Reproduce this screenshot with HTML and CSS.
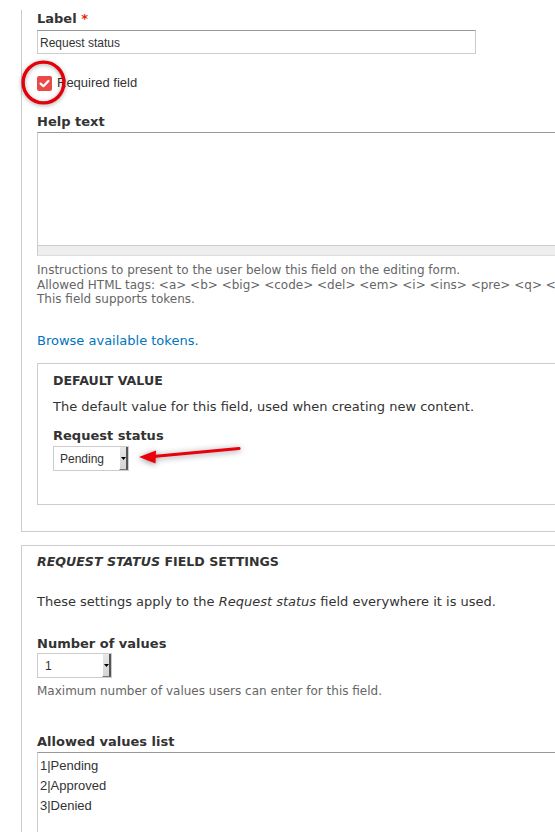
FILE: index.html
```html
<!DOCTYPE html>
<html lang="en">
<head>
<meta charset="utf-8">
<title>Field settings</title>
<link rel="stylesheet" href="styles.css">
</head>
<body>
<div class="page">
  <div class="fieldset fs-top">
    <div class="label first">Label <span class="req">*</span></div>
    <div class="textinput">Request status</div>
    <div class="check-row">
      <span class="checkbox"><svg width="15" height="15" viewBox="0 0 15 15"><path d="M3.6 7.6 L6.4 10.2 L11.4 4.9" fill="none" stroke="#fff" stroke-width="2.2" stroke-linecap="round" stroke-linejoin="round"/></svg></span>
      <span class="check-label">Required field</span>
    </div>
    <div class="label help-label">Help text</div>
    <div class="textarea help-area"></div>
    <div class="grippy"></div>
    <div class="desc">Instructions to present to the user below this field on the editing form.<br>Allowed HTML tags: &lt;a&gt; &lt;b&gt; &lt;big&gt; &lt;code&gt; &lt;del&gt; &lt;em&gt; &lt;i&gt; &lt;ins&gt; &lt;pre&gt; &lt;q&gt; &lt;small&gt; &lt;span&gt; &lt;strong&gt; &lt;sub&gt; &lt;sup&gt; &lt;tt&gt; &lt;ol&gt; &lt;ul&gt; &lt;li&gt; &lt;p&gt; &lt;br&gt; &lt;img&gt;<br>This field supports tokens.</div>
    <a class="link" href="#">Browse available tokens.</a>
    <div class="fieldset inner">
      <div class="legend">DEFAULT VALUE</div>
      <div class="text">The default value for this field, used when creating new content.</div>
      <div class="label sel-label">Request status</div>
      <div class="select sel-pending"><span class="sel-text">Pending</span><span class="sel-btn"><svg width="5" height="3" viewBox="0 0 5 3"><path d="M0 0 H5 L2.5 3 Z" fill="#000"/></svg></span></div>
    </div>
  </div>

  <div class="fieldset fs-settings">
    <div class="legend"><em>REQUEST STATUS</em> FIELD SETTINGS</div>
    <div class="text settings-text">These settings apply to the <em>Request status</em> field everywhere it is used.</div>
    <div class="label num-label">Number of values</div>
    <div class="select sel-num"><span class="sel-text">1</span><span class="sel-btn"><svg width="5" height="3" viewBox="0 0 5 3"><path d="M0 0 H5 L2.5 3 Z" fill="#000"/></svg></span></div>
    <div class="desc num-desc">Maximum number of values users can enter for this field.</div>
    <div class="label allowed-label">Allowed values list</div>
    <div class="textarea values-area">1|Pending<br>2|Approved<br>3|Denied</div>
  </div>
</div>

<svg class="anno-circle" width="50" height="52" viewBox="0 0 50 52"><circle cx="24.5" cy="25.5" r="20.4" fill="none" stroke="#e3000b" stroke-width="3.4"/></svg>
<svg class="anno-arrow" width="120" height="34" viewBox="0 0 120 34"><path d="M110 12.5 L24 20.5" stroke="#e8000a" stroke-width="3.2" stroke-linecap="round" fill="none"/><path d="M10 21 L27 14.5 L26.5 27.5 Z" fill="#e8000a"/></svg>
</body>
</html>
```

FILE: styles.css
```css
html, body {
  margin: 0;
  padding: 0;
  overflow: hidden;
  background: #fff;
}

body {
  width: 555px;
  height: 832px;
  position: relative;
  font-family: "DejaVu Sans", "Noto Sans", sans-serif;
  font-size: 13px;
  color: #333;
}

.page {
  padding-left: 21px;
}

.fieldset {
  border: 1px solid #ccc;
  border-right: none;
}

.fs-top {
  border-top: none;
  padding: 0 0 26px 15px;
}

.label {
  font-weight: bold;
  line-height: 18px;
  white-space: nowrap;
}

.label.first {
  margin-top: 10px;
  margin-bottom: 2px;
}

.req {
  color: #e32700;
}

.textinput {
  box-sizing: border-box;
  width: 439px;
  height: 24px;
  border: 1px solid #ccc;
  border-top-color: #999;
  padding: 1px 2px 0;
  font-family: "Liberation Sans", Arial, sans-serif;
  font-size: 12px;
  line-height: 22px;
  color: #333;
}

.check-row {
  margin-top: 20px;
  height: 18px;
  display: flex;
  align-items: center;
  gap: 5px;
}

.checkbox {
  width: 15px;
  height: 15px;
  border-radius: 2px;
  background: #e84a4a;
  display: block;
}

.checkbox svg {
  display: block;
}

.check-label {
  font-family: "Liberation Sans", Arial, sans-serif;
  font-size: 13px;
  line-height: 18px;
}

.help-label {
  margin-top: 21px;
  margin-bottom: 1px;
}

.textarea {
  box-sizing: border-box;
  width: 620px;
  border: 1px solid #ccc;
  border-top-color: #999;
  border-right: none;
  background: #fff;
}

.help-area {
  height: 114px;
}

.grippy {
  box-sizing: border-box;
  width: 620px;
  height: 10px;
  background: #eee;
  border-left: 1px solid #ccc;
  border-bottom: 1px solid #ddd;
}

.desc {
  margin-top: 7px;
  font-size: 12px;
  line-height: 14.5px;
  color: #666;
  white-space: nowrap;
}

.link {
  display: block;
  margin-top: 25.5px;
  line-height: 18px;
  color: #0074bd;
  text-decoration: none;
  white-space: nowrap;
}

.inner {
  margin-top: 13px;
  padding: 8px 0 33px 15px;
}

.legend {
  font-weight: bold;
  font-size: 12.6px;
  line-height: 18px;
  white-space: nowrap;
}

.text {
  margin-top: 8px;
  line-height: 18px;
  white-space: nowrap;
}

.sel-label {
  margin-top: 11px;
  margin-bottom: 1px;
}

.select {
  box-sizing: border-box;
  height: 25px;
  display: flex;
  align-items: stretch;
  border: 1px solid #ccc;
  background: #fff;
  font-family: "Liberation Sans", Arial, sans-serif;
  font-size: 12px;
  color: #333;
}

.sel-pending {
  width: 76px;
}

.sel-num {
  width: 75px;
}

.sel-text {
  flex: 1;
  padding-left: 6px;
  padding-top: 2px;
  line-height: 21px;
}

.sel-num .sel-text {
  padding-left: 7px;
}

.sel-btn {
  box-sizing: border-box;
  width: 9px;
  display: flex;
  align-items: center;
  justify-content: center;
  background: linear-gradient(#e8e8e8, #d4d4d4);
  border-left: 1px solid #fff;
  border-right: 2px solid #555;
  border-bottom: 1px solid #777;
}

.sel-btn svg {
  display: block;
}

.fs-settings {
  margin-top: 13px;
  padding: 7px 0 0 15px;
  height: 400px;
  border-bottom: none;
}

.settings-text {
  margin-top: 22px;
}

.num-label {
  margin-top: 24px;
  margin-bottom: 0;
}

.num-desc {
  margin-top: 6px;
}

.allowed-label {
  margin-top: 34.5px;
  margin-bottom: 1px;
}

.values-area {
  height: 120px;
  padding: 3px 2px 2px;
  font-family: "Liberation Sans", Arial, sans-serif;
  font-size: 13px;
  line-height: 20px;
  color: #333;
}

.anno-circle {
  position: absolute;
  left: 19px;
  top: 57px;
  filter: drop-shadow(0 1px 2px rgba(0, 0, 0, 0.35));
}

.anno-arrow {
  position: absolute;
  left: 129px;
  top: 436px;
  filter: drop-shadow(0 1px 3px rgba(0, 0, 0, 0.45));
}
```
